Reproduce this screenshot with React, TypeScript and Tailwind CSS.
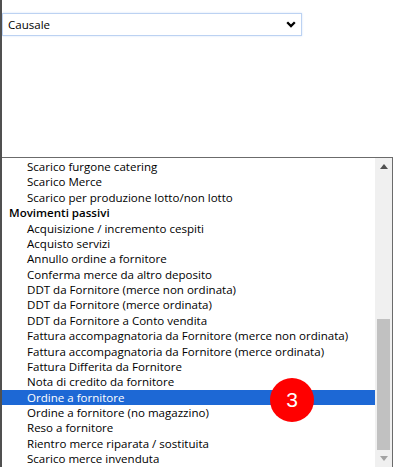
import React from 'react';

type Row = { label: string; group?: boolean };

const rows: Row[] = [
  { label: 'Scarico furgone catering' },
  { label: 'Scarico Merce' },
  { label: 'Scarico per produzione lotto/non lotto' },
  { label: 'Movimenti passivi', group: true },
  { label: 'Acquisizione / incremento cespiti' },
  { label: 'Acquisto servizi' },
  { label: 'Annullo ordine a fornitore' },
  { label: 'Conferma merce da altro deposito' },
  { label: 'DDT da Fornitore (merce non ordinata)' },
  { label: 'DDT da Fornitore (merce ordinata)' },
  { label: 'DDT da Fornitore a Conto vendita' },
  { label: 'Fattura accompagnatoria da Fornitore (merce non ordinata)' },
  { label: 'Fattura accompagnatoria da Fornitore (merce ordinata)' },
  { label: 'Fattura Differita da Fornitore' },
  { label: 'Nota di credito da fornitore' },
  { label: 'Ordine a fornitore' },
  { label: 'Ordine a fornitore (no magazzino)' },
  { label: 'Reso a fornitore' },
  { label: 'Rientro merce riparata / sostituita' },
  { label: 'Scarico merce invenduta' },
];

const selected = 'Ordine a fornitore';

function Arrow({ up, color }: { up?: boolean; color: string }) {
  return (
    <div className="h-[17px] flex items-center justify-center">
      <svg width="8" height="5" viewBox="0 0 8 5">
        <path d={up ? 'M0 5 L4 0 L8 5 Z' : 'M0 0 L4 5 L8 0 Z'} fill={color} />
      </svg>
    </div>
  );
}

export default function App() {
  return (
    <div className="relative w-[395px] h-[467px] overflow-hidden bg-white border-l-2 border-[#505050] font-['Open_Sans',sans-serif] text-[11.55px] text-black">
      <div className="h-[157px] pt-[13px]">
        <div className="w-[300px] h-[23px] border border-[#bcd2f2] shadow-[0_0_2px_#d3e2f8] bg-white flex items-center justify-between pl-[5px] pr-[4px]">
          <span>Causale</span>
          <svg width="10" height="7" viewBox="0 0 10 7" className="mr-[1px]">
            <path d="M1.2 1.2 L5 5 L8.8 1.2" fill="none" stroke="#000" strokeWidth="2.3" />
          </svg>
        </div>
      </div>

      <div className="w-[391px] h-[310px] border-t border-r border-[#6b6b6b] flex">
        <div className="flex-1 pt-[1px]">
          {rows.map((r) => (
            <div
              key={r.label}
              className={`h-[15.38px] leading-[15.38px] whitespace-nowrap ${
                r.group ? 'pl-[7px] font-semibold' : 'pl-[25px]'
              } ${r.label === selected ? 'bg-[#1d68d5] text-white' : ''}`}
            >
              {r.label}
            </div>
          ))}
        </div>
        <div className="w-[17px] bg-[#f0f0f0] flex flex-col">
          <Arrow up color="#505050" />
          <div className="flex-1 flex flex-col justify-end">
            <div className="h-[131px] mx-[2px] bg-[#c1c1c1]" />
          </div>
          <Arrow color="#a3a3a3" />
        </div>
      </div>

      <div className="absolute left-[268px] top-[378px] w-[44px] h-[44px] rounded-full bg-[#ff0000] flex items-center justify-center text-white text-[21px] font-['Liberation_Sans',sans-serif]">
        3
      </div>
    </div>
  );
}
